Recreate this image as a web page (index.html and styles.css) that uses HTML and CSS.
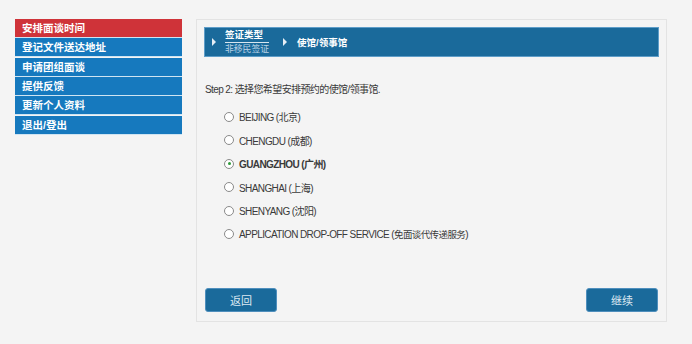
FILE: index.html
```html
<!DOCTYPE html>
<html lang="zh-CN">
<head>
    <meta charset="UTF-8">
    <title>使馆/领事馆</title>
    <link rel="stylesheet" href="styles.css">
</head>
<body>
<div class="page">
    <ul class="menu">
        <li class="active">安排面谈时间</li>
        <li>登记文件送达地址</li>
        <li>申请团组面谈</li>
        <li>提供反馈</li>
        <li>更新个人资料</li>
        <li>退出/登出</li>
    </ul>
    <div class="panel">
        <div class="steps">
            <span class="arrow"></span>
            <div class="step-done">
                <span class="step-title">签证类型</span>
                <span class="step-value">非移民签证</span>
            </div>
            <span class="arrow"></span>
            <span class="step-current">使馆/领事馆</span>
        </div>
        <p class="prompt">Step 2: 选择您希望安排预约的使馆/领事馆.</p>
        <ul class="options">
            <li><span class="radio"></span>BEIJING (北京)</li>
            <li><span class="radio"></span>CHENGDU (成都)</li>
            <li class="checked"><span class="radio"></span>GUANGZHOU (广州)</li>
            <li><span class="radio"></span>SHANGHAI (上海)</li>
            <li><span class="radio"></span>SHENYANG (沈阳)</li>
            <li><span class="radio"></span>APPLICATION DROP-OFF SERVICE (<span class="cjk">免面谈代传递服务</span>)</li>
        </ul>
        <div class="actions">
            <button class="btn">返回</button>
            <button class="btn">继续</button>
        </div>
    </div>
</div>
</body>
</html>
```

FILE: styles.css
```css
body{
    margin: 0;
    background-color: #f4f4f4;
    font-family: "Liberation Sans", "Noto Sans CJK SC", sans-serif;
    color: #3a3a3a;
}
.page{
    display: flex;
    gap: 14px;
    padding: 19px 0 0 15px;
}
.menu{
    list-style: none;
    margin: 0;
    padding: 0;
    width: 167px;
    align-self: flex-start;
}
.menu li{
    height: 18px;
    line-height: 18px;
    padding-left: 7px;
    border-bottom: 1px solid #cfe4f2;
    background-color: #1679be;
    color: #ffffff;
    font-size: 10.5px;
    font-weight: bold;
    margin-bottom: 0.35px;
}
.menu li.active{
    background-color: #cf3339;
}
.panel{
    width: 455px;
    height: 285px;
    padding: 7px 7px 9px 7px;
    border: 1px solid #e3e3e3;
    display: flex;
    flex-direction: column;
}
.steps{
    height: 28px;
    border: 1px solid #5e9dc8;
    background-color: #1a6a9b;
    display: flex;
    align-items: center;
    color: #ffffff;
    font-size: 9.5px;
}
.arrow{
    width: 0;
    height: 0;
    border-top: 4px solid transparent;
    border-bottom: 4px solid transparent;
    border-left: 4px solid #e6eef5;
    margin: 0 9px 0 7px;
}
.step-done{
    display: flex;
    flex-direction: column;
    margin-right: 7px;
}
.step-title{
    font-weight: bold;
    line-height: 12px;
    padding-bottom: 1px;
    border-bottom: 1px solid #d8e6f0;
}
.step-value{
    color: #b9d2e6;
    font-size: 8.8px;
    line-height: 12px;
}
.step-current{
    font-weight: bold;
    margin-left: 1px;
}
.prompt{
    margin: 26px 0 0 1px;
    font-size: 10px;
    letter-spacing: -0.6px;
    line-height: 14px;
}
.options{
    list-style: none;
    margin: 8px 0 0 0;
    padding: 0 0 0 20px;
}
.options li{
    display: flex;
    align-items: center;
    height: 23.5px;
    font-size: 10px;
    letter-spacing: -0.6px;
    white-space: pre;
}
.options .cjk{
    font-size: 9.5px;
}
.options li.checked{
    font-weight: bold;
}
.radio{
    width: 8px;
    height: 8px;
    border: 1px solid #8a8a8a;
    border-radius: 50%;
    background-color: #ffffff;
    margin-right: 5px;
    display: flex;
    align-items: center;
    justify-content: center;
}
.checked .radio::after{
    content: "";
    width: 3px;
    height: 3px;
    border-radius: 50%;
    background-color: #2f9a3a;
}
.actions{
    margin-top: auto;
    display: flex;
    justify-content: space-between;
    padding: 0 1px;
}
.btn{
    width: 72px;
    height: 24px;
    border: 1px solid #4f8fbd;
    border-radius: 3px;
    background-color: #1a6a9b;
    color: #dce8f2;
    font-family: "Noto Sans CJK SC", sans-serif;
    font-size: 11px;
    padding: 0;
}
```
